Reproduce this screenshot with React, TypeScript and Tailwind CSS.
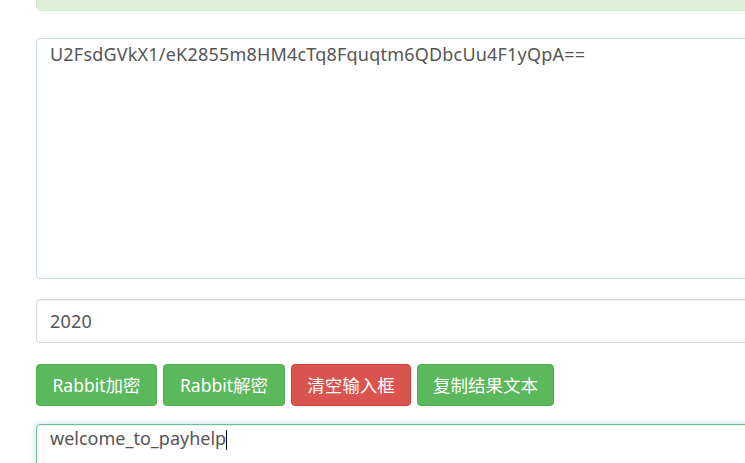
import React from 'react';

const font = { fontFamily: '"Noto Sans", "Noto Sans CJK SC", sans-serif' };

const App = () => {
  return (
    <div className="w-[745px] h-[463px] overflow-hidden bg-white" style={font}>
      <div className="w-[760px] pl-[36px]">
        <div className="h-[15px] -mt-[4px] mb-[27px] bg-[#dff0d8] border border-[#d6e9c6] rounded-[4px]"></div>

        <div className="h-[241px] border border-[#c9d8e3] rounded-[4px] px-[13px] py-[2px] text-[18px] tracking-[0.2px] leading-[26px] text-[#555]">
          U2FsdGVkX1/eK2855m8HM4cTq8Fquqtm6QDbcUu4F1yQpA==
        </div>

        <div className="mt-[20px] h-[44px] flex items-center border border-[#d4d8db] rounded-[4px] px-[13px] text-[18px] tracking-[0.2px] text-[#555] shadow-[inset_0_1px_1px_rgba(0,0,0,0.075)]">
          2020
        </div>

        <div className="mt-[21px] flex gap-[6px]">
          <button className="w-[121px] h-[42px] bg-[#5cb85c] border border-[#4cae4c] rounded-[4px] text-white text-[17.5px]">Rabbit加密</button>
          <button className="w-[122px] h-[42px] bg-[#5cb85c] border border-[#4cae4c] rounded-[4px] text-white text-[17.5px]">Rabbit解密</button>
          <button className="w-[120px] h-[42px] bg-[#d9534f] border border-[#d43f3a] rounded-[4px] text-white text-[17.5px]">清空输入框</button>
          <button className="w-[137px] h-[42px] bg-[#5cb85c] border border-[#4cae4c] rounded-[4px] text-white text-[17.5px]">复制结果文本</button>
        </div>

        <div className="mt-[18px] h-[80px] border border-[#6cc091] rounded-[4px] px-[13px] py-0 text-[18px] leading-[26px] text-[#555] shadow-[inset_0_1px_1px_rgba(0,0,0,0.075),0_0_6px_rgba(102,175,233,0.4)]">
          welcome_to_payhelp<span className="inline-block w-px h-[20px] bg-black align-middle"></span>
        </div>
      </div>
    </div>
  );
};

export default App;
